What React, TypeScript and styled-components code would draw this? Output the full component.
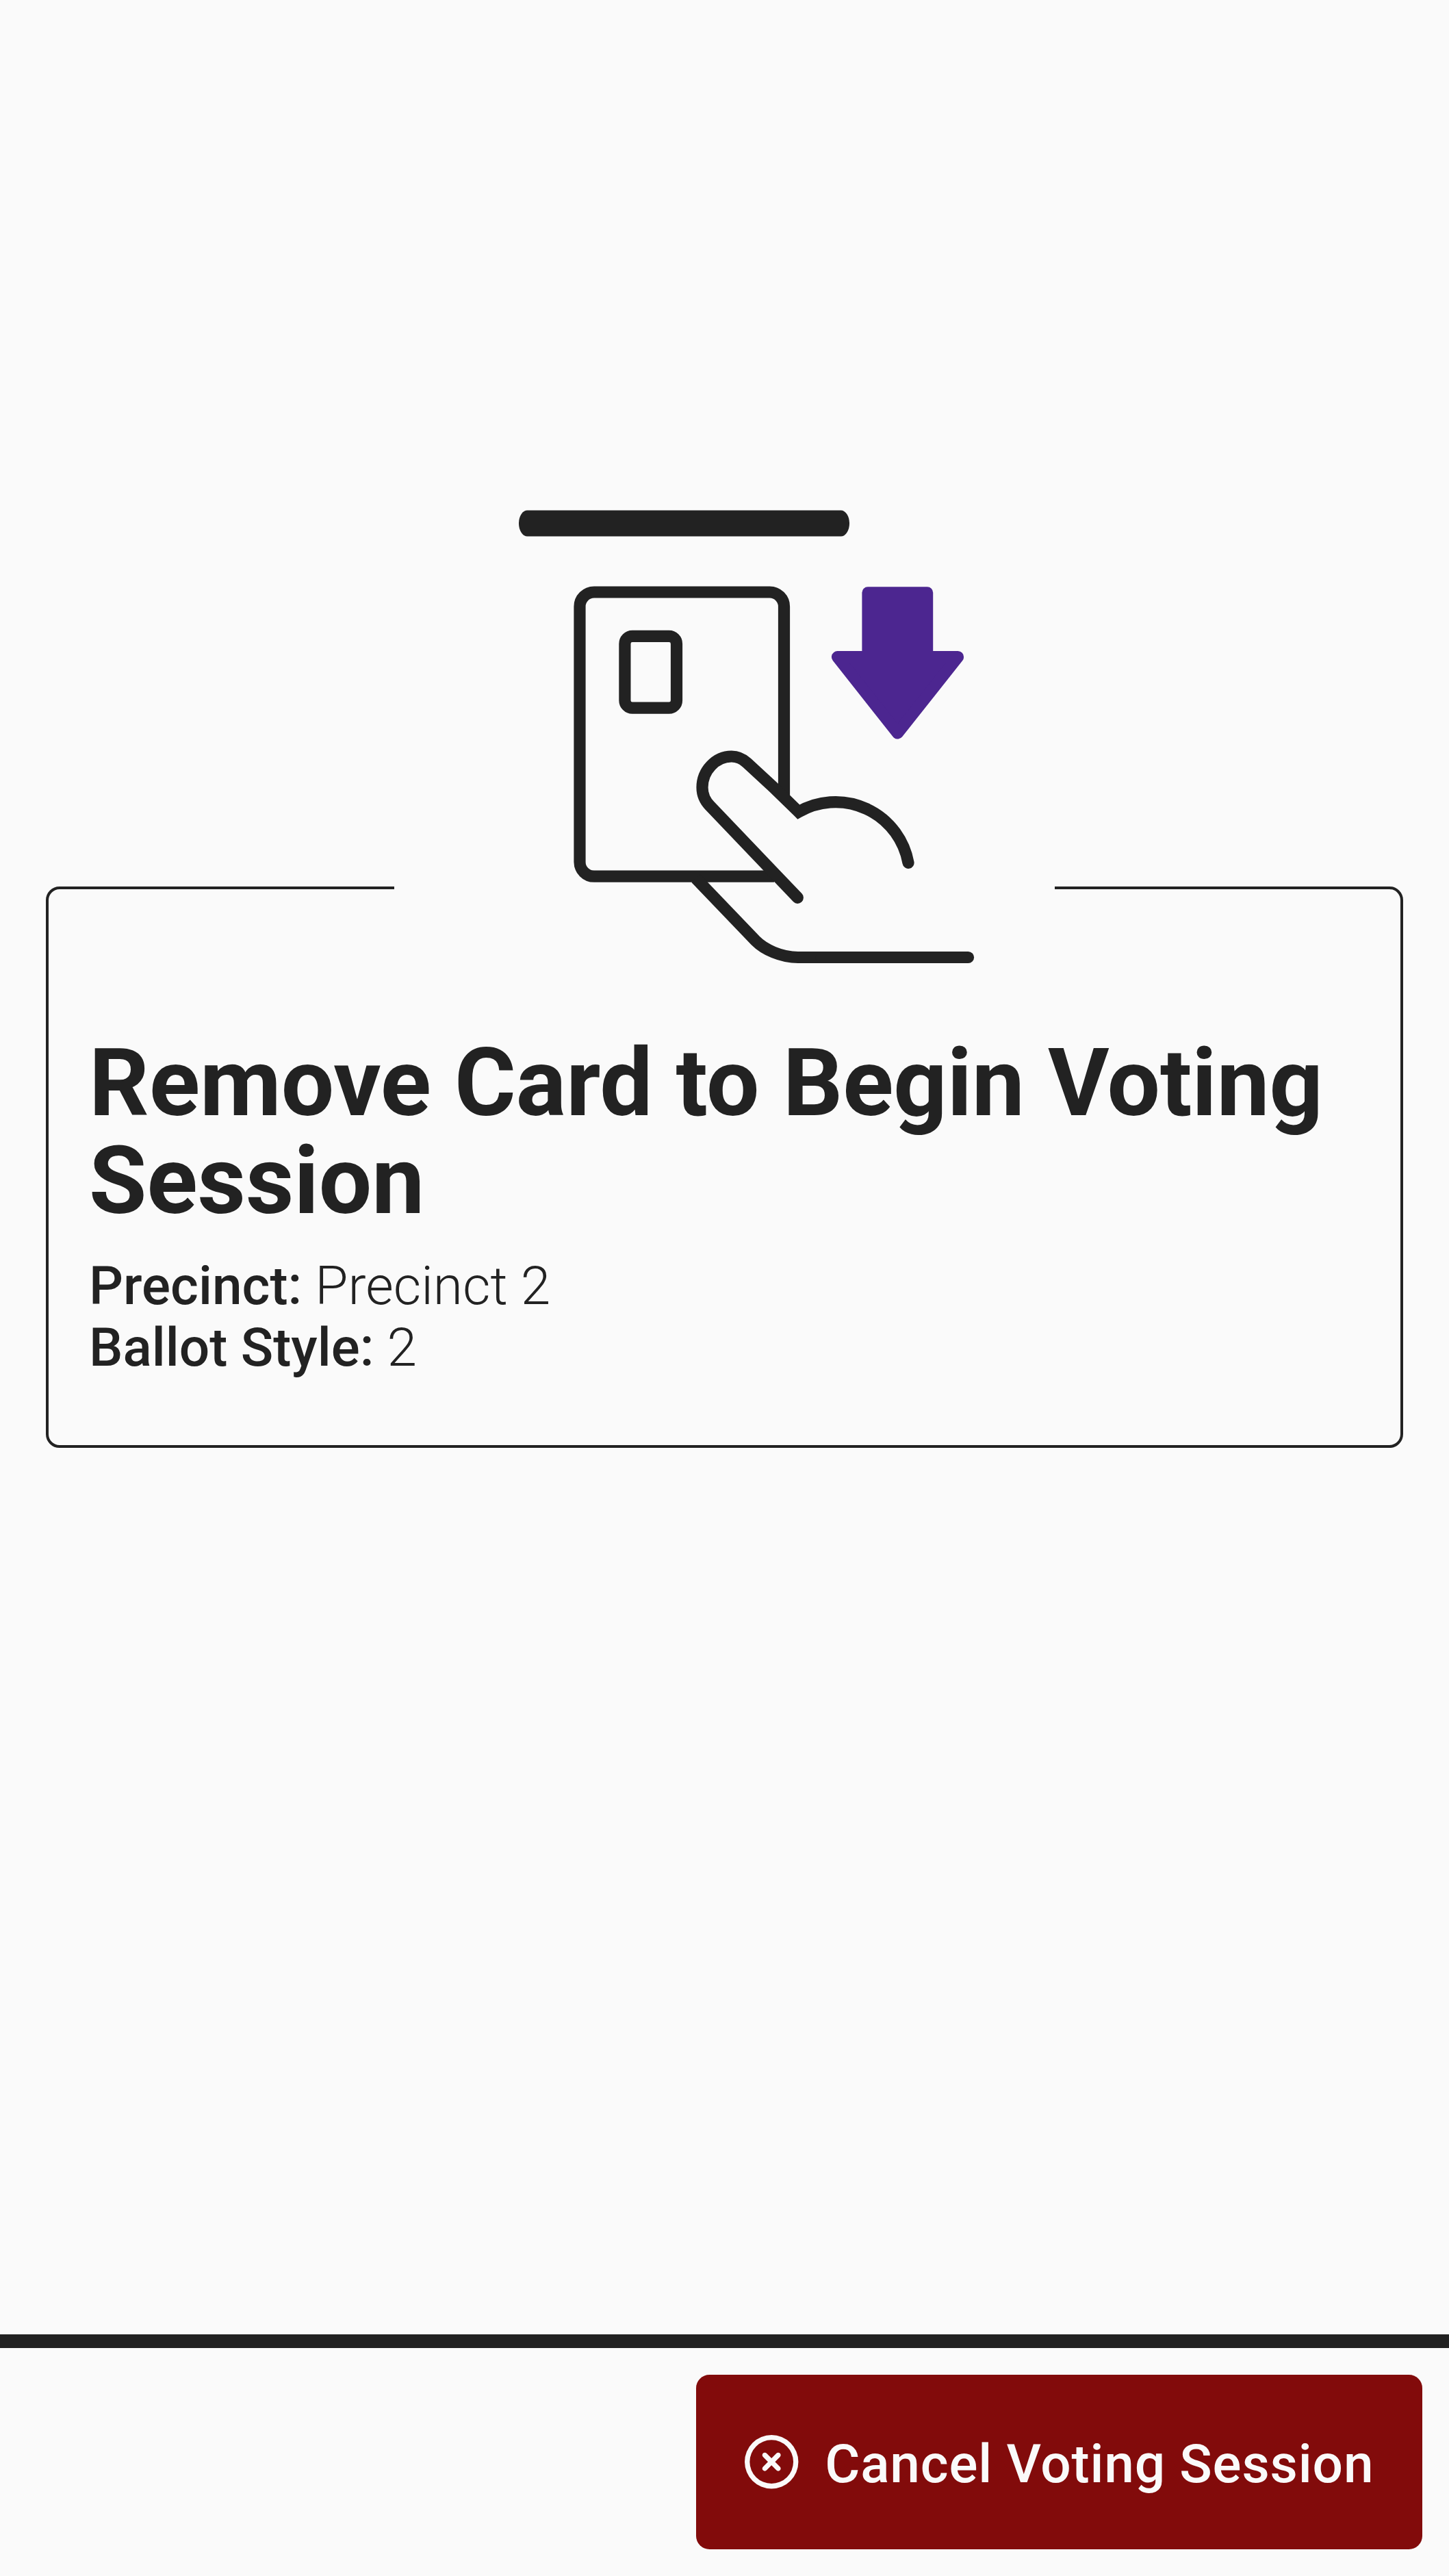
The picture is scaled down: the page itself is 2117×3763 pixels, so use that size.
import React from 'react';
import styled, { createGlobalStyle } from 'styled-components';
import { FaRegCircleXmark } from 'react-icons/fa6';

const color = {
  background: '#fafafa',
  foreground: '#222222',
  primary: '#4c2690',
  danger: '#820b0b',
};

const GlobalStyle = createGlobalStyle`
  *, *::before, *::after {
    box-sizing: border-box;
  }

  body {
    margin: 0;
    background: ${color.background};
    color: ${color.foreground};
    font-family: Roboto, 'Liberation Sans', sans-serif;
  }
`;

const Screen = styled.div`
  display: flex;
  flex-direction: column;
  height: 100vh;
  background: ${color.background};
  font-size: 78.4px;
  line-height: 90px;
`;

const Main = styled.main`
  display: flex;
  flex: 1;
  flex-direction: column;
  justify-content: center;
  padding: 0 67px;
`;

const SessionCard = styled.section`
  display: flex;
  flex-direction: column;
  height: 820px;
  border: 4px solid ${color.foreground};
  border-radius: 20px;
  padding: 0 59px;
`;

const Illustration = styled.svg`
  flex: none;
  align-self: center;
  width: 965px;
  height: 674px;
  margin: -563px 0 101px;
  background: ${color.background};
`;

const Title = styled.h1`
  margin: 0 0 36px;
  font-size: 137.2px;
  font-weight: 700;
  line-height: 143px;
`;

const Details = styled.div`
  display: flex;
  flex-direction: column;
`;

const Detail = styled.div`
  font-weight: 300;
`;

const DetailLabel = styled.span`
  font-weight: 500;
`;

const Footer = styled.footer`
  display: flex;
  flex: none;
  justify-content: flex-end;
  padding: 39px;
  border-top: 20px solid ${color.foreground};
`;

const DangerButton = styled.button`
  display: flex;
  align-items: center;
  gap: 38.3px;
  height: 255px;
  margin: 0;
  border: 0;
  border-radius: 19.6px;
  padding: 0 70.6px 0 71px;
  background: ${color.danger};
  color: ${color.background};
  font-family: inherit;
  font-size: inherit;
  font-weight: 500;
  line-height: inherit;
  letter-spacing: 0.84px;
  white-space: nowrap;

  svg {
    flex: none;
    width: 78.4px;
    height: 78.4px;
  }
`;

const ButtonLabel = styled.span`
  padding-top: 5px;
`;

function RemoveCardImage() {
  return (
    <Illustration viewBox="576 736 965 674" aria-hidden="true">
      <rect x="758" y="745.4" width="483" height="38.2" rx="12.5" ry="19.1" fill={color.foreground} />
      <g fill="none" stroke={color.foreground} strokeWidth="17.2">
        <path d="M1145.5 1162V886a21 21 0 0 0-21-21H868a21 21 0 0 0-21 21V1259.2a21 21 0 0 0 21 21H1131" />
        <rect x="912.9" y="929.4" width="75.6" height="104.8" rx="11" />
        <path
          strokeLinecap="round"
          d="M1165.3 1311.3L1037.3 1177.3C1029.5 1169.5 1026 1160.5 1026 1150.3C1026 1125.5 1046 1105 1068.7 1105C1077 1105 1085 1108.5 1091.3 1114.3Q1130 1149 1166.8 1186A108 108 0 0 1 1327 1260.3"
        />
        <path d="M1016.7 1283.3L1104 1374.3C1116.5 1387 1141 1398.5 1166 1398.5H1200" />
        <path strokeLinecap="round" d="M1200 1398.5H1414.5" />
      </g>
      <g fill={color.primary}>
        <rect x="1259.4" y="857.3" width="103.8" height="105" rx="8.5" />
        <path
          stroke={color.primary}
          strokeWidth="17.2"
          strokeLinejoin="round"
          d="M1223.5 959.7H1399.5L1311.4 1071Z"
        />
      </g>
    </Illustration>
  );
}

const details = [
  { label: 'Precinct:', value: 'Precinct 2' },
  { label: 'Ballot Style:', value: '2' },
];

export default function App() {
  return (
    <Screen>
      <GlobalStyle />
      <Main>
        <SessionCard>
          <RemoveCardImage />
          <Title>Remove Card to Begin Voting Session</Title>
          <Details>
            {details.map(({ label, value }) => (
              <Detail key={label}>
                <DetailLabel>{label}</DetailLabel> {value}
              </Detail>
            ))}
          </Details>
        </SessionCard>
      </Main>
      <Footer>
        <DangerButton type="button">
          <FaRegCircleXmark />
          <ButtonLabel>Cancel Voting Session</ButtonLabel>
        </DangerButton>
      </Footer>
    </Screen>
  );
}
